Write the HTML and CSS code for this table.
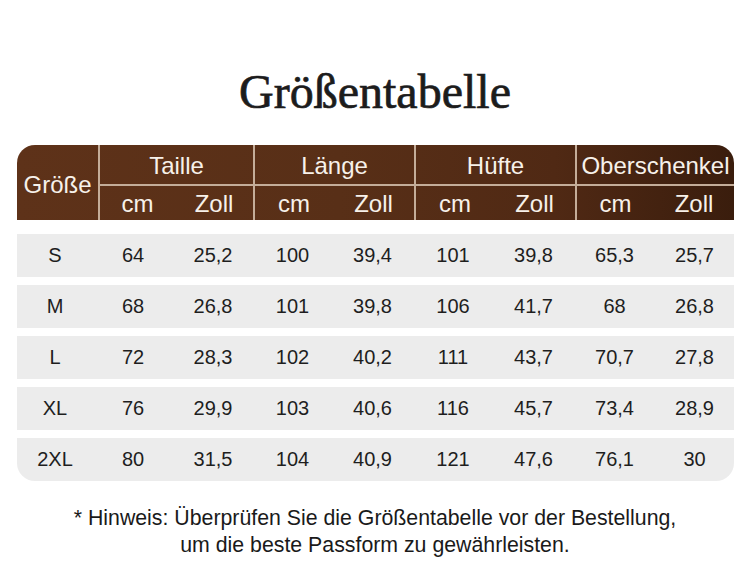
FILE: index.html
```html
<!DOCTYPE html>
<html lang="de">
<head>
<meta charset="utf-8">
<title>Größentabelle</title>
<link rel="stylesheet" href="styles.css">
</head>
<body>
<main class="page">
  <h1 class="title">Größentabelle</h1>
  <section class="chart">
    <div class="head">
      <div class="h-size">Größe</div>
      <div class="h-group g1">Taille</div>
      <div class="h-group g2">Länge</div>
      <div class="h-group g3">Hüfte</div>
      <div class="h-group g4">Oberschenkel</div>
      <div class="h-sub sep">cm</div><div class="h-sub">Zoll</div>
      <div class="h-sub sep">cm</div><div class="h-sub">Zoll</div>
      <div class="h-sub sep">cm</div><div class="h-sub">Zoll</div>
      <div class="h-sub sep">cm</div><div class="h-sub">Zoll</div>
    </div>
    <div class="rows">
      <div class="row"><span>S</span><span>64</span><span>25,2</span><span>100</span><span>39,4</span><span>101</span><span>39,8</span><span>65,3</span><span>25,7</span></div>
      <div class="row"><span>M</span><span>68</span><span>26,8</span><span>101</span><span>39,8</span><span>106</span><span>41,7</span><span>68</span><span>26,8</span></div>
      <div class="row"><span>L</span><span>72</span><span>28,3</span><span>102</span><span>40,2</span><span>111</span><span>43,7</span><span>70,7</span><span>27,8</span></div>
      <div class="row"><span>XL</span><span>76</span><span>29,9</span><span>103</span><span>40,6</span><span>116</span><span>45,7</span><span>73,4</span><span>28,9</span></div>
      <div class="row last"><span>2XL</span><span>80</span><span>31,5</span><span>104</span><span>40,9</span><span>121</span><span>47,6</span><span>76,1</span><span>30</span></div>
    </div>
  </section>
  <p class="note">* Hinweis: Überprüfen Sie die Größentabelle vor der Bestellung,<br>um die beste Passform zu gewährleisten.</p>
</main>
</body>
</html>
```

FILE: styles.css
```css
html, body {
  margin: 0;
  padding: 0;
  background: #ffffff;
}

.page {
  width: 750px;
  height: 587px;
  overflow: hidden;
  font-family: "Liberation Sans", Arial, sans-serif;
}

.title {
  margin: 0;
  padding-top: 68px;
  height: 48px;
  line-height: 48px;
  font-family: "Liberation Serif", "Times New Roman", serif;
  font-weight: normal;
  font-size: 48px;
  color: #1c1c1c;
  -webkit-text-stroke: 0.7px #1c1c1c;
  text-align: center;
}

.chart {
  margin: 29px 16px 0 17px;
  width: 717px;
}

.head {
  display: grid;
  grid-template-columns: 81px 77px 78px 80px 81px 80px 81px 79px 80px;
  grid-template-rows: 41px 34px;
  background: linear-gradient(90deg, #5e3219 0%, #582f17 45%, #502914 75%, #3a1d0d 100%);
  border-radius: 18px 18px 0 0;
  color: #f7f1ea;
  font-size: 24px;
}

.head > div {
  display: flex;
  align-items: center;
  justify-content: center;
}

.h-size {
  grid-row: 1 / 3;
  grid-column: 1;
  padding-top: 4px;
}

.h-group {
  grid-column: span 2;
  border-left: 2px solid #c4ad99;
  border-bottom: 2px solid #c4ad99;
  padding-top: 2px;
}

.h-sub {
  padding-top: 2px;
}

.h-sub.sep {
  border-left: 2px solid #c4ad99;
}

.rows {
  display: flex;
  flex-direction: column;
  gap: 8px;
  margin-top: 14px;
}

.row {
  display: grid;
  grid-template-columns: 76px 80px 80px 79px 81px 80px 81px 81px 79px;
  height: 43px;
  align-items: center;
  background: #ececec;
  color: #1e1e1e;
  font-size: 20px;
}

.row span {
  text-align: center;
}

.row.last {
  border-radius: 0 0 18px 18px;
}

.note {
  margin: 24px 0 0 0;
  font-size: 21.3px;
  line-height: 27px;
  color: #1a1a1a;
  text-align: center;
}
```
